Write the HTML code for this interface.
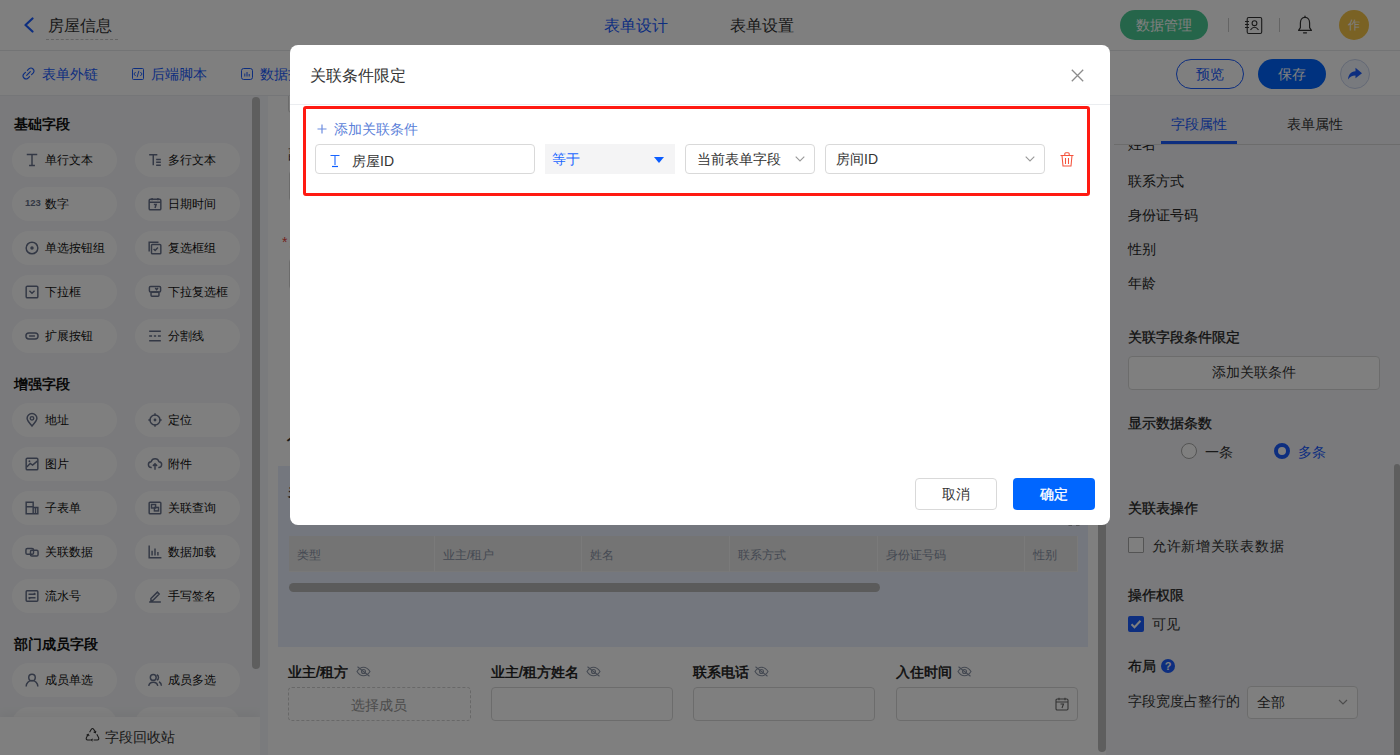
<!DOCTYPE html>
<html><head><meta charset="utf-8">
<style>
*{box-sizing:border-box;margin:0;padding:0}
html,body{width:1400px;height:755px;overflow:hidden;background:#fff}
body{position:relative;font-family:"Liberation Sans",sans-serif;font-size:14px;color:#333}
.a{position:absolute}
.t{position:absolute;white-space:nowrap;line-height:1}
svg{display:block}
#header{left:0;top:0;width:1400px;height:51px;background:#fff;border-bottom:1px solid #e6e8eb}
#toolbar{left:0;top:51px;width:1400px;height:45px;background:#fff;border-bottom:1px solid #ebedf0}
#sidebar{left:0;top:96px;width:260px;height:659px;background:#f4f5f8}
#canvas{left:260px;top:96px;width:846px;height:659px;background:#fff}
#rp{left:1106px;top:96px;width:294px;height:659px;background:#f4f5f8}
#overlay{left:0;top:0;width:1400px;height:755px;background:rgba(0,0,0,.5)}
#modal{left:290px;top:45px;width:820px;height:480px;background:#fff;border-radius:8px}
.pill{position:absolute;width:105px;height:34px;border-radius:17px;background:#fff}
.pill .ic{position:absolute;left:13px;top:10px;width:14px;height:14px;overflow:visible}
.pill .tx{position:absolute;left:33px;top:11px;font-size:12px;line-height:12px;color:#111;white-space:nowrap}
.sh{position:absolute;left:14px;font-size:14px;font-weight:bold;color:#111;line-height:14px}
</style></head><body>

<div id="header" class="a">
  <svg class="a" style="left:22px;top:17px" width="14" height="16" viewBox="0 0 14 16"><path d="M10.5 1.5 L3.5 8 L10.5 14.5" fill="none" stroke="#1a5cff" stroke-width="2.2" stroke-linecap="round" stroke-linejoin="round"/></svg>
  <div class="t" style="left:48px;top:18px;font-size:16px;line-height:16px;color:#333">房屋信息</div>
  <div class="a" style="left:46px;top:39px;width:72px;height:0;border-top:1px dashed #c8c8c8"></div>
  <div class="t" style="left:604px;top:18px;font-size:16px;line-height:16px;color:#1a5cff">表单设计</div>
  <div class="t" style="left:730px;top:18px;font-size:16px;line-height:16px;color:#333">表单设置</div>
  <div class="a" style="left:1120px;top:10px;width:88px;height:30px;border-radius:15px;background:#4acb94"></div>
  <div class="t" style="left:1136px;top:18px;font-size:14px;line-height:14px;color:#fff">数据管理</div>
  <div class="a" style="left:1228px;top:18px;width:1px;height:14px;background:#c8c8c8"></div>
  <svg class="a" style="left:1244px;top:16px" width="20" height="19" viewBox="0 0 20 19"><rect x="3.2" y="1.5" width="14.5" height="16" rx="1.5" fill="none" stroke="#333" stroke-width="1.1"/><circle cx="10.5" cy="7.2" r="2.4" fill="none" stroke="#333" stroke-width="1.1"/><path d="M6.5 13.8 Q10.5 8.8 14.5 13.8" fill="none" stroke="#333" stroke-width="1.1"/><path d="M1 5.5h4M1 8.5h4M1 11.5h4" stroke="#333" stroke-width="1.1"/></svg>
  <div class="a" style="left:1279px;top:18px;width:1px;height:14px;background:#c8c8c8"></div>
  <svg class="a" style="left:1297px;top:15px" width="16" height="20" viewBox="0 0 16 20"><path d="M8 2.4 C4.8 2.4 3.4 5 3.4 8 L3.4 12.6 L1.6 15.4 L14.4 15.4 L12.6 12.6 L12.6 8 C12.6 5 11.2 2.4 8 2.4Z" fill="none" stroke="#333" stroke-width="1.2" stroke-linejoin="round"/><path d="M8 1v1.4M6.5 17.8h3" stroke="#333" stroke-width="1.2" stroke-linecap="round"/></svg>
  <div class="a" style="left:1339px;top:10px;width:30px;height:30px;border-radius:15px;background:#f4c448"></div>
  <div class="t" style="left:1348px;top:19px;font-size:12px;line-height:12px;color:#fff">作</div>
</div>
<div id="toolbar" class="a">
  <svg class="a" style="left:22px;top:16px" width="13" height="13" viewBox="0 0 13 13"><path d="M5.4 3.4L7.1 1.7a3 3 0 0 1 4.2 4.2L9.6 7.6M7.6 9.6L5.9 11.3a3 3 0 0 1-4.2-4.2L3.4 5.4M4.7 8.3L8.3 4.7" fill="none" stroke="#1a5cff" stroke-width="1.15" stroke-linecap="round"/></svg>
  <div class="t" style="left:42px;top:16px;font-size:14px;line-height:14px;color:#1a5cff">表单外链</div>
  <svg class="a" style="left:132px;top:17px" width="12" height="12" viewBox="0 0 12 12"><rect x="0.5" y="0.5" width="11" height="11" rx="1" fill="none" stroke="#1a5cff" stroke-width="1"/><path d="M3.6 4L1.9 6l1.7 2M8.4 4l1.7 2-1.7 2M6.9 2.8L5.1 9.2" fill="none" stroke="#1a5cff" stroke-width="0.95"/></svg>
  <div class="t" style="left:151px;top:16px;font-size:14px;line-height:14px;color:#1a5cff">后端脚本</div>
  <svg class="a" style="left:241px;top:17px" width="12" height="12" viewBox="0 0 12 12"><rect x="0.5" y="0.5" width="11" height="11" rx="2.2" fill="none" stroke="#1a5cff" stroke-width="1"/><path d="M3.8 5.5v3M6 4v4.5M8.2 6v2.5" stroke="#1a5cff" stroke-width="1"/></svg>
  <div class="t" style="left:260px;top:16px;font-size:14px;line-height:14px;color:#1a5cff">数据报表</div>
  <div class="a" style="left:1176px;top:8px;width:68px;height:30px;border-radius:15px;border:1px solid #1a5cff;background:#fff"></div>
  <div class="t" style="left:1196px;top:16px;font-size:14px;line-height:14px;color:#1a5cff">预览</div>
  <div class="a" style="left:1258px;top:8px;width:68px;height:30px;border-radius:15px;background:#0064ff"></div>
  <div class="t" style="left:1278px;top:16px;font-size:14px;line-height:14px;color:#fff">保存</div>
  <div class="a" style="left:1340px;top:8px;width:30px;height:30px;border-radius:15px;border:1px solid #c9d3ec;background:#f0f4fc"></div>
  <svg class="a" style="left:1347px;top:16px" width="16" height="14" viewBox="0 0 16 14"><path d="M8.5 0.8 L15 6.2 L8.5 11.2 L8.5 8.4 C5 8.4 2.8 9.8 1 12.6 C1.3 8 3.8 4.4 8.5 4.2Z" fill="#1a5cff"/></svg>
</div>
<div id="sidebar" class="a">
<div class="sh" style="top:21px">基础字段</div>
<div class="pill" style="left:12px;top:47px"><svg class="ic" viewBox="0 0 12 12"><path d="M1.5 1.2h9M6 1.2v9.6M3.5 10.8h5" fill="none" stroke="#66708a" stroke-width="1.25"/></svg><div class="tx">单行文本</div></div>
<div class="pill" style="left:135px;top:47px"><svg class="ic" viewBox="0 0 12 12"><path d="M1 1.5h7M4.5 1.5v9M7 5.5h4M7 8h4M7 10.5h4" fill="none" stroke="#66708a" stroke-width="1.25"/></svg><div class="tx">多行文本</div></div>
<div class="pill" style="left:12px;top:91px"><svg class="ic" viewBox="0 0 12 12"><text x="0" y="7.6" style="font-family:'Liberation Sans',sans-serif;font-size:8.4px;font-weight:bold" fill="#66708a" textLength="13.6" lengthAdjust="spacingAndGlyphs">123</text></svg><div class="tx">数字</div></div>
<div class="pill" style="left:135px;top:91px"><svg class="ic" viewBox="0 0 12 12"><rect x="1" y="2" width="10" height="9" rx="1" fill="none" stroke="#66708a" stroke-width="1.25"/><path d="M1 4.5h10M3.5 0.8v2M8.5 0.8v2M5 6.5h2l-1 3" fill="none" stroke="#66708a" stroke-width="1.25"/></svg><div class="tx">日期时间</div></div>
<div class="pill" style="left:12px;top:135px"><svg class="ic" viewBox="0 0 12 12"><circle cx="6" cy="6" r="5" fill="none" stroke="#66708a" stroke-width="1.25"/><circle cx="6" cy="6" r="1.5" fill="#66708a"/></svg><div class="tx">单选按钮组</div></div>
<div class="pill" style="left:135px;top:135px"><svg class="ic" viewBox="0 0 12 12"><path d="M1 9V1h8" fill="none" stroke="#66708a" stroke-width="1.25"/><rect x="3" y="3" width="8" height="8" rx="0.8" fill="none" stroke="#66708a" stroke-width="1.25"/><path d="M4.8 6.8l1.3 1.3 2.4-2.6" fill="none" stroke="#66708a" stroke-width="1.25"/></svg><div class="tx">复选框组</div></div>
<div class="pill" style="left:12px;top:179px"><svg class="ic" viewBox="0 0 12 12"><rect x="1" y="1" width="10" height="10" rx="1" fill="none" stroke="#66708a" stroke-width="1.25"/><path d="M3.8 5l2.2 2 2.2-2" fill="none" stroke="#66708a" stroke-width="1.25"/></svg><div class="tx">下拉框</div></div>
<div class="pill" style="left:135px;top:179px"><svg class="ic" viewBox="0 0 12 12"><rect x="1.2" y="1.2" width="9.6" height="4.8" rx="1" fill="none" stroke="#66708a" stroke-width="1.25"/><rect x="2.6" y="6" width="6.8" height="3.6" rx="0.8" fill="none" stroke="#66708a" stroke-width="1.25"/><path d="M6.2 2.6l1.2 1.3 1.2-1.3" fill="none" stroke="#66708a" stroke-width="1.25"/></svg><div class="tx">下拉复选框</div></div>
<div class="pill" style="left:12px;top:223px"><svg class="ic" viewBox="0 0 12 12"><rect x="0.8" y="3.5" width="10.4" height="5" rx="2.5" fill="none" stroke="#66708a" stroke-width="1.25"/><path d="M3.5 6h5" fill="none" stroke="#66708a" stroke-width="1.25"/></svg><div class="tx">扩展按钮</div></div>
<div class="pill" style="left:135px;top:223px"><svg class="ic" viewBox="0 0 12 12"><path d="M1 2h10M1 6h2.5M5 6h2M8.5 6h2.5M1 10h10" fill="none" stroke="#66708a" stroke-width="1.25"/></svg><div class="tx">分割线</div></div>
<div class="sh" style="top:281px">增强字段</div>
<div class="pill" style="left:12px;top:307px"><svg class="ic" viewBox="0 0 12 12"><path d="M6 11.2C3.5 8.5 1.8 6.5 1.8 4.6a4.2 4.2 0 0 1 8.4 0c0 1.9-1.7 3.9-4.2 6.6z" fill="none" stroke="#66708a" stroke-width="1.25"/><circle cx="6" cy="4.6" r="1.5" fill="none" stroke="#66708a" stroke-width="1.25"/></svg><div class="tx">地址</div></div>
<div class="pill" style="left:135px;top:307px"><svg class="ic" viewBox="0 0 12 12"><circle cx="6" cy="6" r="4.3" fill="none" stroke="#66708a" stroke-width="1.25"/><circle cx="6" cy="6" r="1.2" fill="#66708a"/><path d="M6 0.3v2M6 9.7v2M0.3 6h2M9.7 6h2" fill="none" stroke="#66708a" stroke-width="1.25"/></svg><div class="tx">定位</div></div>
<div class="pill" style="left:12px;top:351px"><svg class="ic" viewBox="0 0 12 12"><rect x="1" y="1" width="10" height="10" rx="1" fill="none" stroke="#66708a" stroke-width="1.25"/><path d="M1.5 8.5l3-3 2 1.5 4-3.5" fill="none" stroke="#66708a" stroke-width="1.25"/><circle cx="3.8" cy="3.6" r="0.8" fill="#66708a"/></svg><div class="tx">图片</div></div>
<div class="pill" style="left:135px;top:351px"><svg class="ic" viewBox="0 0 12 12"><path d="M3.2 9H3a2.5 2.5 0 0 1-.3-5A3.5 3.5 0 0 1 9.4 4a2.5 2.5 0 0 1-.4 5h-.2M6 11V6M4.2 7.6L6 5.8l1.8 1.8" fill="none" stroke="#66708a" stroke-width="1.25"/></svg><div class="tx">附件</div></div>
<div class="pill" style="left:12px;top:395px"><svg class="ic" viewBox="0 0 12 12"><path d="M1 1h6v10H1zM1 5h6M7 5.5h4V11H7M9 5.5v5.5" fill="none" stroke="#66708a" stroke-width="1.25"/></svg><div class="tx">子表单</div></div>
<div class="pill" style="left:135px;top:395px"><svg class="ic" viewBox="0 0 12 12"><rect x="1" y="1" width="10" height="10" rx="0.8" fill="none" stroke="#66708a" stroke-width="1.25"/><rect x="3" y="3" width="3.5" height="3" fill="none" stroke="#66708a" stroke-width="1.25"/><rect x="5.5" y="5.5" width="3.5" height="3" fill="none" stroke="#66708a" stroke-width="1.25"/></svg><div class="tx">关联查询</div></div>
<div class="pill" style="left:12px;top:439px"><svg class="ic" viewBox="0 0 12 12"><rect x="0.8" y="3" width="6.5" height="5" rx="1.2" fill="none" stroke="#66708a" stroke-width="1.25"/><rect x="4.7" y="4.5" width="6.5" height="5" rx="1.2" fill="none" stroke="#66708a" stroke-width="1.25"/></svg><div class="tx">关联数据</div></div>
<div class="pill" style="left:135px;top:439px"><svg class="ic" viewBox="0 0 12 12"><path d="M1 0.5v10.5h10.5M3.5 9V5M6 9V3M8.5 9V6" fill="none" stroke="#66708a" stroke-width="1.25"/></svg><div class="tx">数据加载</div></div>
<div class="pill" style="left:12px;top:483px"><svg class="ic" viewBox="0 0 12 12"><rect x="1" y="1.5" width="10" height="9" rx="0.8" fill="none" stroke="#66708a" stroke-width="1.25"/><path d="M3 4.5h6M3 7.5h6M7.5 3.5l1.5 1M4.5 8.5L3 7.5" fill="none" stroke="#66708a" stroke-width="1.25"/></svg><div class="tx">流水号</div></div>
<div class="pill" style="left:135px;top:483px"><svg class="ic" viewBox="0 0 12 12"><path d="M2.5 8.2l5.5-5.5 1.6 1.6-5.5 5.5H2.5zM1 11.2h10" fill="none" stroke="#66708a" stroke-width="1.25"/></svg><div class="tx">手写签名</div></div>
<div class="sh" style="top:541px">部门成员字段</div>
<div class="pill" style="left:12px;top:567px"><svg class="ic" viewBox="0 0 12 12"><circle cx="6" cy="3.8" r="2.8" fill="none" stroke="#66708a" stroke-width="1.25"/><path d="M1 11.5a5 5 0 0 1 10 0" fill="none" stroke="#66708a" stroke-width="1.25"/></svg><div class="tx">成员单选</div></div>
<div class="pill" style="left:135px;top:567px"><svg class="ic" viewBox="0 0 12 12"><circle cx="4.5" cy="3.8" r="2.5" fill="none" stroke="#66708a" stroke-width="1.25"/><path d="M0.6 11a4 4 0 0 1 7.8 0M7.5 1.5a2.5 2.5 0 0 1 0 4.6M9.5 7.5a4 4 0 0 1 2 3.5" fill="none" stroke="#66708a" stroke-width="1.25"/></svg><div class="tx">成员多选</div></div>
<div class="pill" style="left:12px;top:611px"><svg class="ic" viewBox="0 0 12 12"></svg><div class="tx">部门单选</div></div>
<div class="pill" style="left:135px;top:611px"><svg class="ic" viewBox="0 0 12 12"></svg><div class="tx">部门多选</div></div>
<div class="a" style="left:252px;top:1px;width:8px;height:572px;border-radius:4px;background:#bdbdbd"></div>
<div class="a" style="left:0;top:621px;width:260px;height:38px;background:#fff;box-shadow:0 -3px 10px rgba(0,0,0,.05)"></div>
<svg class="a" style="left:85px;top:632px" width="15" height="14" viewBox="0 0 15 14"><path d="M4.6 4.2L6.3 1.3Q7.5 -0.2 8.7 1.3L10.2 3.9M11.8 6.3L13.6 9.6Q14.3 11.8 12.4 12H8.6M5.6 12H2.6Q0.7 11.8 1.4 9.6L2.9 7" fill="none" stroke="#333" stroke-width="1.1"/><path d="M10.8 2.8l-0.4 1.9-1.8-0.6M7.7 10.9l-1.5 1.1 1.5 1.1M1.6 7.2l1.6-0.9 0.9 1.6" fill="none" stroke="#333" stroke-width="1.1"/></svg>
<div class="t" style="left:105px;top:634px;font-size:14px;line-height:14px;color:#333">字段回收站</div>
</div>
<div id="canvas" class="a">
<div class="a" style="left:0;top:0;width:8px;height:659px;background:#f4f6fb"></div>
<div class="a" style="left:28px;top:0;width:40px;height:17px;border:1px solid #d9d9d9;border-top:none;border-radius:0 0 4px 4px"></div>
<div class="t" style="left:28px;top:51px;font-size:14px;line-height:14px;color:#333">副标题</div>
<div class="a" style="left:29px;top:74px;width:180px;height:32px;border:1px solid #d9d9d9;border-radius:4px"></div>
<div class="t" style="left:22px;top:139px;font-size:14px;line-height:14px;color:#e8443a">*</div>
<div class="t" style="left:30px;top:138px;font-size:14px;line-height:14px;color:#333;font-weight:bold">房屋ID</div>
<div class="a" style="left:29px;top:162px;width:180px;height:32px;border:1px solid #d9d9d9;border-radius:4px"></div>
<div class="t" style="left:27px;top:331px;font-size:14px;line-height:14px;color:#333;font-weight:bold">人员</div>
<div class="a" style="left:18px;top:370px;width:810px;height:181px;background:#e9effc"></div>
<div class="t" style="left:28px;top:388px;font-size:14px;line-height:14px;color:#333;font-weight:bold">关联表</div>
<div class="a" style="left:29px;top:440px;width:146px;height:36px;background:#e8e8e8;border-right:1px solid #f5f5f5;border-bottom:1px solid #f0f0f0;overflow:hidden"><div class="t" style="left:8px;top:13px;font-size:12px;line-height:12px;color:#8a93a6">类型</div></div>
<div class="a" style="left:175px;top:440px;width:147px;height:36px;background:#e8e8e8;border-right:1px solid #f5f5f5;border-bottom:1px solid #f0f0f0;overflow:hidden"><div class="t" style="left:8px;top:13px;font-size:12px;line-height:12px;color:#8a93a6">业主/租户</div></div>
<div class="a" style="left:322px;top:440px;width:148px;height:36px;background:#e8e8e8;border-right:1px solid #f5f5f5;border-bottom:1px solid #f0f0f0;overflow:hidden"><div class="t" style="left:8px;top:13px;font-size:12px;line-height:12px;color:#8a93a6">姓名</div></div>
<div class="a" style="left:470px;top:440px;width:148px;height:36px;background:#e8e8e8;border-right:1px solid #f5f5f5;border-bottom:1px solid #f0f0f0;overflow:hidden"><div class="t" style="left:8px;top:13px;font-size:12px;line-height:12px;color:#8a93a6">联系方式</div></div>
<div class="a" style="left:618px;top:440px;width:147px;height:36px;background:#e8e8e8;border-right:1px solid #f5f5f5;border-bottom:1px solid #f0f0f0;overflow:hidden"><div class="t" style="left:8px;top:13px;font-size:12px;line-height:12px;color:#8a93a6">身份证号码</div></div>
<div class="a" style="left:765px;top:440px;width:53px;height:36px;background:#e8e8e8;border-right:1px solid #f5f5f5;border-bottom:1px solid #f0f0f0;overflow:hidden"><div class="t" style="left:8px;top:13px;font-size:12px;line-height:12px;color:#8a93a6">性别</div></div>
<div class="a" style="left:29px;top:487px;width:591px;height:9px;border-radius:5px;background:#b6b6b6"></div>
<div class="t" style="left:28px;top:569px;font-size:14px;line-height:14px;color:#1a1a1a;font-weight:500;-webkit-text-stroke:0.5px #1a1a1a">业主/租方</div>
<svg class="a" style="left:96px;top:570px" width="15" height="11" viewBox="0 0 15 11"><path d="M1 5.5C3 2.3 5.2 1.2 7.5 1.2s4.5 1.1 6.5 4.3c-2 3.2-4.2 4.3-6.5 4.3S3 8.7 1 5.5z" fill="none" stroke="#8a93a5" stroke-width="1.1"/><circle cx="7.5" cy="5.5" r="2" fill="none" stroke="#8a93a5" stroke-width="1.1"/><path d="M1.5 0.8l12 9.4" stroke="#8a93a5" stroke-width="1.1"/></svg>
<div class="a" style="left:28px;top:591px;width:183px;height:34px;border:1px dashed #d0d0d0;border-radius:4px"></div>
<div class="t" style="left:91px;top:602px;font-size:14px;line-height:14px;color:#999">选择成员</div>
<div class="t" style="left:231px;top:569px;font-size:14px;line-height:14px;color:#1a1a1a;font-weight:500;-webkit-text-stroke:0.5px #1a1a1a">业主/租方姓名</div>
<svg class="a" style="left:326px;top:570px" width="15" height="11" viewBox="0 0 15 11"><path d="M1 5.5C3 2.3 5.2 1.2 7.5 1.2s4.5 1.1 6.5 4.3c-2 3.2-4.2 4.3-6.5 4.3S3 8.7 1 5.5z" fill="none" stroke="#8a93a5" stroke-width="1.1"/><circle cx="7.5" cy="5.5" r="2" fill="none" stroke="#8a93a5" stroke-width="1.1"/><path d="M1.5 0.8l12 9.4" stroke="#8a93a5" stroke-width="1.1"/></svg>
<div class="a" style="left:231px;top:591px;width:182px;height:34px;border:1px solid #d9d9d9;border-radius:4px"></div>
<div class="t" style="left:433px;top:569px;font-size:14px;line-height:14px;color:#1a1a1a;font-weight:500;-webkit-text-stroke:0.5px #1a1a1a">联系电话</div>
<svg class="a" style="left:494px;top:570px" width="15" height="11" viewBox="0 0 15 11"><path d="M1 5.5C3 2.3 5.2 1.2 7.5 1.2s4.5 1.1 6.5 4.3c-2 3.2-4.2 4.3-6.5 4.3S3 8.7 1 5.5z" fill="none" stroke="#8a93a5" stroke-width="1.1"/><circle cx="7.5" cy="5.5" r="2" fill="none" stroke="#8a93a5" stroke-width="1.1"/><path d="M1.5 0.8l12 9.4" stroke="#8a93a5" stroke-width="1.1"/></svg>
<div class="a" style="left:433px;top:591px;width:182px;height:34px;border:1px solid #d9d9d9;border-radius:4px"></div>
<div class="t" style="left:636px;top:569px;font-size:14px;line-height:14px;color:#1a1a1a;font-weight:500;-webkit-text-stroke:0.5px #1a1a1a">入住时间</div>
<svg class="a" style="left:697px;top:570px" width="15" height="11" viewBox="0 0 15 11"><path d="M1 5.5C3 2.3 5.2 1.2 7.5 1.2s4.5 1.1 6.5 4.3c-2 3.2-4.2 4.3-6.5 4.3S3 8.7 1 5.5z" fill="none" stroke="#8a93a5" stroke-width="1.1"/><circle cx="7.5" cy="5.5" r="2" fill="none" stroke="#8a93a5" stroke-width="1.1"/><path d="M1.5 0.8l12 9.4" stroke="#8a93a5" stroke-width="1.1"/></svg>
<div class="a" style="left:636px;top:591px;width:182px;height:34px;border:1px solid #d9d9d9;border-radius:4px"></div>
<svg class="a" style="left:795px;top:601px" width="14" height="14" viewBox="0 0 14 14"><rect x="1" y="2" width="12" height="11" rx="1.2" fill="none" stroke="#666" stroke-width="1.1"/><path d="M1 5h12M4 0.8v2.4M10 0.8v2.4M5.5 7h3l-1.5 4" fill="none" stroke="#666" stroke-width="1.1"/></svg>
<svg class="a" style="left:808px;top:418px" width="12" height="12" viewBox="0 0 12 12"><path d="M1 4V1h3M8 1h3v3M11 8v3H8M4 11H1V8" fill="none" stroke="#666" stroke-width="1.1"/></svg>
<div class="a" style="left:838px;top:300px;width:8px;height:356px;border-radius:4px;background:#bdbdbd"></div>
</div>
<div id="rp" class="a">
<div class="t" style="left:65px;top:21px;font-size:14px;line-height:14px;color:#1a5cff">字段属性</div>
<div class="t" style="left:181px;top:21px;font-size:14px;line-height:14px;color:#333">表单属性</div>
<div class="a" style="left:0;top:49px;width:294px;height:610px;overflow:hidden">
<div class="t" style="left:22px;top:-8px;font-size:14px;line-height:14px;color:#262626">姓名</div>
<div class="t" style="left:22px;top:29px;font-size:14px;line-height:14px;color:#262626">联系方式</div>
<div class="t" style="left:22px;top:63px;font-size:14px;line-height:14px;color:#262626">身份证号码</div>
<div class="t" style="left:22px;top:97px;font-size:14px;line-height:14px;color:#262626">性别</div>
<div class="t" style="left:22px;top:131px;font-size:14px;line-height:14px;color:#262626">年龄</div>
</div>
<div class="a" style="left:8px;top:48px;width:286px;height:1px;background:#d9d9d9"></div>
<div class="a" style="left:55px;top:45px;width:76px;height:3px;background:#1a5cff"></div>
<div class="t" style="left:22px;top:234px;font-size:14px;line-height:14px;color:#222;font-weight:500;-webkit-text-stroke:0.3px #222">关联字段条件限定</div>
<div class="a" style="left:22px;top:260px;width:252px;height:34px;border:1px solid #d9d9d9;border-radius:4px;background:#fff"></div>
<div class="t" style="left:106px;top:269px;font-size:14px;line-height:14px;color:#333">添加关联条件</div>
<div class="t" style="left:22px;top:320px;font-size:14px;line-height:14px;color:#222;font-weight:500;-webkit-text-stroke:0.3px #222">显示数据条数</div>
<div class="a" style="left:75px;top:347px;width:16px;height:16px;border:1px solid #a8a8a8;border-radius:8px;background:#fff"></div>
<div class="t" style="left:99px;top:349px;font-size:14px;line-height:14px;color:#333">一条</div>
<div class="a" style="left:168px;top:347px;width:16px;height:16px;border:4px solid #1a5cff;border-radius:8px;background:#fff"></div>
<div class="t" style="left:192px;top:349px;font-size:14px;line-height:14px;color:#1a5cff">多条</div>
<div class="t" style="left:22px;top:405px;font-size:14px;line-height:14px;color:#222;font-weight:500;-webkit-text-stroke:0.3px #222">关联表操作</div>
<div class="a" style="left:22px;top:441px;width:16px;height:16px;border:1px solid #a8a8a8;border-radius:1px;background:#fff"></div>
<div class="t" style="left:46px;top:443px;font-size:14px;line-height:14px;color:#333;letter-spacing:0.7px">允许新增关联表数据</div>
<div class="t" style="left:22px;top:492px;font-size:14px;line-height:14px;color:#222;font-weight:500;-webkit-text-stroke:0.3px #222">操作权限</div>
<div class="a" style="left:22px;top:520px;width:16px;height:16px;border-radius:2px;background:#1a5cff"></div>
<svg class="a" style="left:22px;top:520px" width="16" height="16" viewBox="0 0 16 16"><path d="M3.5 8.2l3 3 6-6.5" fill="none" stroke="#fff" stroke-width="2"/></svg>
<div class="t" style="left:46px;top:521px;font-size:14px;line-height:14px;color:#333">可见</div>
<div class="t" style="left:22px;top:563px;font-size:14px;line-height:14px;color:#222;font-weight:500;-webkit-text-stroke:0.3px #222">布局</div>
<div class="a" style="left:55px;top:563px;width:14px;height:14px;border-radius:7px;background:#1a5cff;color:#fff;font-size:11px;line-height:14px;text-align:center;font-weight:bold">?</div>
<div class="t" style="left:22px;top:598px;font-size:14px;line-height:14px;color:#333;font-weight:normal">字段宽度占整行的</div>
<div class="a" style="left:141px;top:590px;width:111px;height:33px;border:1px solid #d9d9d9;border-radius:4px;background:#fff"></div>
<div class="t" style="left:151px;top:599px;font-size:14px;line-height:14px;color:#333">全部</div>
<svg class="a" style="left:232px;top:603px" width="10" height="6" viewBox="0 0 10 6"><path d="M1 1l4 4 4-4" fill="none" stroke="#999" stroke-width="1.2"/></svg>
<div class="a" style="left:288px;top:368px;width:6px;height:300px;border-radius:3px;background:#bdbdbd"></div>
</div>

<div id="overlay" class="a"></div>
<div id="modal" class="a">
<div class="t" style="left:20px;top:23px;font-size:16px;line-height:16px;color:#333">关联条件限定</div>
<svg class="a" style="left:781px;top:24px" width="13" height="13" viewBox="0 0 13 13"><path d="M0.8 0.8l11.4 11.4M12.2 0.8L0.8 12.2" stroke="#8c8c8c" stroke-width="1.3"/></svg>
<div class="a" style="left:0;top:59px;width:820px;height:1px;background:#ebedf0"></div>
<div class="a" style="left:13px;top:61px;width:787px;height:90px;border:3px solid #ff1a12;border-radius:3px"></div>
<svg class="a" style="left:27px;top:79px" width="10" height="10" viewBox="0 0 10 10"><path d="M5 0.5v9M0.5 5h9" stroke="#6d8de0" stroke-width="1.2"/></svg>
<div class="t" style="left:44px;top:77px;font-size:14px;line-height:14px;color:#5b7fd9">添加关联条件</div>
<div class="a" style="left:25px;top:99px;width:220px;height:30px;border:1px solid #d9d9d9;border-radius:4px"></div>
<svg class="a" style="left:40px;top:109px" width="10" height="14" viewBox="0 0 10 14"><path d="M0.5 1.5h9M5 1.5v9.5" fill="none" stroke="#1a66ff" stroke-width="1.1"/><path d="M2 12.5h6" stroke="#0a5cff" stroke-width="1.2"/></svg>
<div class="t" style="left:62px;top:109px;font-size:14px;line-height:14px;color:#333">房屋ID</div>
<div class="a" style="left:255px;top:99px;width:130px;height:30px;background:#f4f4f5"></div>
<div class="t" style="left:262px;top:107px;font-size:14px;line-height:14px;color:#1a66ff">等于</div>
<svg class="a" style="left:364px;top:112px" width="10" height="6" viewBox="0 0 10 6"><path d="M0 0h10L5 6z" fill="#0a5cff"/></svg>
<div class="a" style="left:395px;top:99px;width:130px;height:30px;border:1px solid #d9d9d9;border-radius:4px"></div>
<div class="t" style="left:407px;top:107px;font-size:14px;line-height:14px;color:#333">当前表单字段</div>
<svg class="a" style="left:505px;top:111px" width="10" height="6" viewBox="0 0 10 6"><path d="M0.7 0.7l4.3 4.3 4.3-4.3" fill="none" stroke="#999" stroke-width="1.1"/></svg>
<div class="a" style="left:535px;top:99px;width:220px;height:30px;border:1px solid #d9d9d9;border-radius:4px"></div>
<div class="t" style="left:546px;top:107px;font-size:14px;line-height:14px;color:#333">房间ID</div>
<svg class="a" style="left:735px;top:111px" width="10" height="6" viewBox="0 0 10 6"><path d="M0.7 0.7l4.3 4.3 4.3-4.3" fill="none" stroke="#999" stroke-width="1.1"/></svg>
<svg class="a" style="left:770px;top:107px" width="14" height="15" viewBox="0 0 14 15"><path d="M0.5 3.5h13M4.8 3.5V1.8a1 1 0 0 1 1-1h2.4a1 1 0 0 1 1 1v1.7M2 3.5l1 10.5h8l1-10.5M5.5 6v6M8.5 6v6" fill="none" stroke="#f5533d" stroke-width="1.05"/></svg>
<div class="a" style="left:625px;top:433px;width:82px;height:32px;border:1px solid #d9d9d9;border-radius:4px;background:#fff"></div>
<div class="t" style="left:652px;top:442px;font-size:14px;line-height:14px;color:#333">取消</div>
<div class="a" style="left:723px;top:433px;width:82px;height:32px;border-radius:4px;background:#0066ff"></div>
<div class="t" style="left:750px;top:442px;font-size:14px;line-height:14px;color:#fff;font-weight:500;-webkit-text-stroke:0.3px #fff">确定</div>
</div>

</body></html>
